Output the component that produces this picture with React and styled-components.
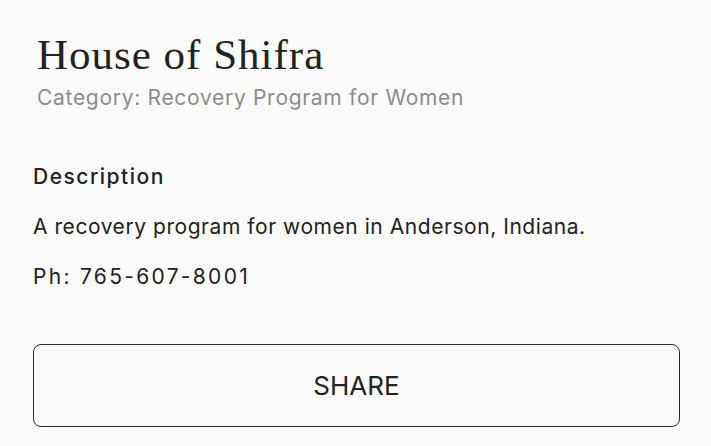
import React from "react";
import styled, { createGlobalStyle } from "styled-components";

const GlobalStyle = createGlobalStyle`
  html, body {
    margin: 0;
    background: #fafafa;
  }
  body {
    font-family: Inter, "Noto Sans", sans-serif;
    color: #222;
  }
`;

const Card = styled.div`
  display: flex;
  flex-direction: column;
  padding: 26px 31px 0 33px;
`;

const Header = styled.div`
  display: flex;
  flex-direction: column;
  padding-left: 4px;
`;

const Title = styled.h1`
  margin: 0;
  font-family: "Liberation Serif", "DejaVu Serif", serif;
  font-weight: 400;
  font-size: 43px;
  line-height: 58px;
  letter-spacing: 1px;
  color: #222;
`;

const Category = styled.div`
  font-size: 21px;
  line-height: 28px;
  letter-spacing: 0.7px;
  color: #8c8c8c;
`;

const Section = styled.div`
  display: flex;
  flex-direction: column;
  gap: 22px;
  margin-top: 51px;
`;

const Label = styled.div`
  font-size: 21px;
  font-weight: 500;
  line-height: 28px;
  letter-spacing: 1.5px;
  color: #222;
`;

const Text = styled.p`
  margin: 0;
  font-size: 21px;
  line-height: 28px;
  letter-spacing: ${(p) => (p.wide ? "2.3px" : "0.55px")};
  color: #222;
`;

const ShareButton = styled.button`
  margin-top: 53px;
  height: 83px;
  border: 1.5px solid #2a2a2a;
  border-radius: 8px;
  background: transparent;
  font-family: Inter, "Noto Sans", sans-serif;
  font-size: 26px;
  color: #222;
  cursor: pointer;
`;

export default function App() {
  return (
    <>
      <GlobalStyle />
      <Card>
        <Header>
          <Title>House of Shifra</Title>
          <Category>Category: Recovery Program for Women</Category>
        </Header>
        <Section>
          <Label>Description</Label>
          <Text>A recovery program for women in Anderson, Indiana.</Text>
          <Text wide>Ph: 765-607-8001</Text>
        </Section>
        <ShareButton>SHARE</ShareButton>
      </Card>
    </>
  );
}
